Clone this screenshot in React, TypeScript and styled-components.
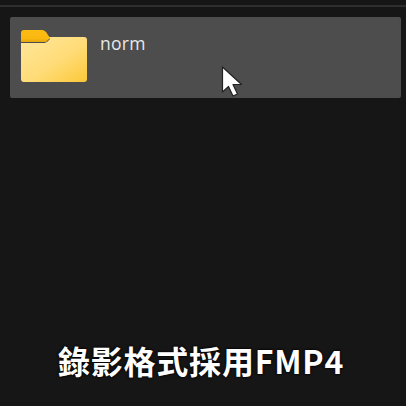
import React from "react";
import styled, { createGlobalStyle } from "styled-components";

const Global = createGlobalStyle`
  html, body { margin: 0; padding: 0; background: #161616; }
`;

const Page = styled.div`
  position: relative;
  width: 406px;
  height: 406px;
  background: #161616;
  overflow: hidden;
  display: flex;
  flex-direction: column;
  font-family: "Noto Sans", sans-serif;
`;

const TopRule = styled.div`
  height: 2px;
  margin-top: 5px;
  background: #2e2e2e;
`;

const FolderRow = styled.div`
  margin: 10px 5px 0 10px;
  height: 81px;
  box-sizing: border-box;
  background: #4d4d4d;
  border-radius: 2px;
  display: flex;
  align-items: flex-start;
  padding: 13px 0 0 11px;
  gap: 13px;
`;

const FolderIcon = styled.svg`
  width: 66px;
  height: 52px;
  flex: none;
`;

const FolderName = styled.span`
  font-family: "Open Sans", "Noto Sans", sans-serif;
  font-size: 17.5px;
  line-height: 22px;
  letter-spacing: 0.3px;
  color: #e8e8e8;
  margin-top: 2px;
`;

const Caption = styled.div`
  margin-top: auto;
  padding: 0 4px 24px 0;
  text-align: center;
  font-family: "Noto Sans CJK TC", "Noto Sans CJK SC", sans-serif;
  font-weight: 700;
  font-size: 32px;
  line-height: 44px;
  letter-spacing: 0.8px;
  color: #ffffff;
  text-shadow: 0 0 2px #000, 0 0 3px #000;
`;

const Cursor = styled.svg`
  position: absolute;
  left: 221px;
  top: 66px;
  width: 22px;
  height: 31px;
`;

export default function App() {
  return (
    <Page>
      <Global />
      <TopRule />
      <FolderRow>
        <FolderIcon viewBox="0 0 66 52">
          <defs>
            <linearGradient id="body" x1="0" y1="0" x2="1" y2="1">
              <stop offset="0" stopColor="#ffe69a" />
              <stop offset="0.55" stopColor="#ffdc78" />
              <stop offset="1" stopColor="#fcc838" />
            </linearGradient>
            <linearGradient id="tab" x1="0" y1="0" x2="0" y2="1">
              <stop offset="0" stopColor="#fcbc14" />
              <stop offset="0.7" stopColor="#fbb80f" />
              <stop offset="1" stopColor="#e3a610" />
            </linearGradient>
          </defs>
          <path
            d="M3 0H20C22 0 23.500 0.500 25 2L29 8L25 12H0V3C0 1 1 0 3 0Z"
            fill="url(#tab)"
          />
          <path
            d="M28 7H63C65 7 66 8 66 10V49C66 51 65 52 63 52H3C1 52 0 51 0 49V13H22C24 13 25 12.500 26 12L29 9Z"
            fill="url(#body)"
          />
        </FolderIcon>
        <FolderName>norm</FolderName>
      </FolderRow>
      <Caption>錄影格式採用FMP4</Caption>
      <Cursor viewBox="0 0 22 31">
        <path
          d="M1.500 1V26L7.500 20.500L12 30L16.500 28L12 18.500H20.500Z"
          fill="#fff"
          stroke="#222"
          strokeWidth="1.200"
          strokeLinejoin="round"
        />
      </Cursor>
    </Page>
  );
}
